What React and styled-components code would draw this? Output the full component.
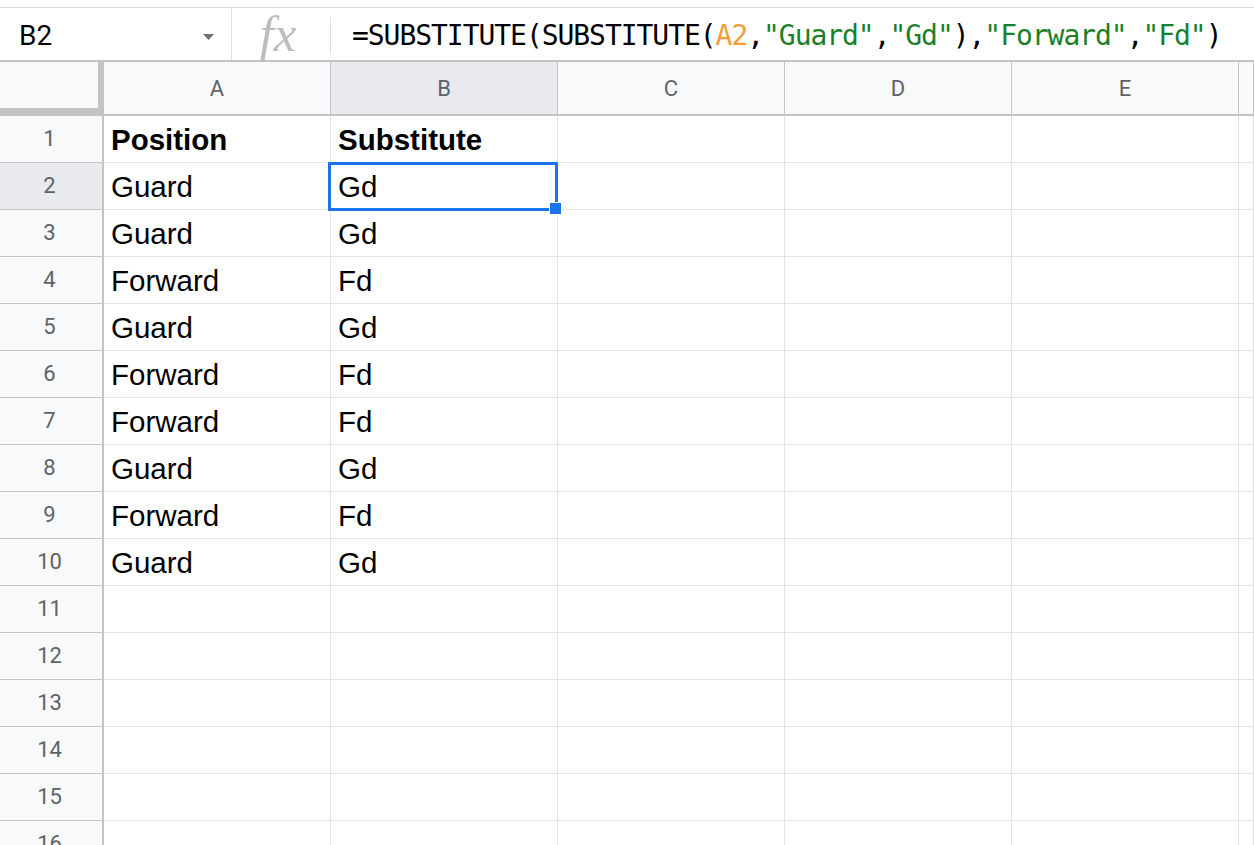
import React from "react";
import styled, { createGlobalStyle } from "styled-components";

const GlobalStyle = createGlobalStyle`
  html, body { margin: 0; padding: 0; background: #fff; overflow: hidden; }
  #root { width: 1254px; height: 845px; }
`;

const Page = styled.div`
  width: 1254px;
  height: 845px;
  overflow: hidden;
  background: #fff;
  display: flex;
  flex-direction: column;
`;

const TopGap = styled.div`
  height: 7px;
  flex: none;
  background: #fff;
`;

const FormulaBar = styled.div`
  height: 55px;
  flex: none;
  box-sizing: border-box;
  border-top: 1px solid #dadce0;
  border-bottom: 2px solid #c4c4c4;
  display: flex;
  align-items: stretch;
`;

const NameBox = styled.div`
  width: 232px;
  box-sizing: border-box;
  border-right: 1px solid #e0e0e0;
  display: flex;
  align-items: center;
  justify-content: space-between;
  padding: 3px 17px 0 19px;
  font-family: Roboto, "Liberation Sans", sans-serif;
  font-size: 28px;
  color: #000;
`;

const FxBox = styled.div`
  width: 98px;
  display: flex;
  align-items: center;
  justify-content: center;
  padding-right: 6px;
  box-sizing: border-box;
  font-family: "Liberation Serif", serif;
  font-style: italic;
  font-size: 51px;
  color: #bdbdbd;
  line-height: 1;
`;

const Divider = styled.div`
  width: 1px;
  height: 37px;
  align-self: center;
  margin-top: 2px;
  background: #e0e0e0;
`;

const FormulaText = styled.div`
  display: flex;
  align-items: center;
  padding: 3px 0 0 21px;
  font-family: "DejaVu Sans Mono", "Liberation Mono", monospace;
  font-size: 28px;
  letter-spacing: -1.05px;
  color: #000;
  white-space: pre;
`;

const Tok = styled.span`
  color: ${(p) => (p.$kind === "range" ? "#f09d3a" : p.$kind === "str" ? "#1b7f2a" : "#000")};
`;

const Grid = styled.div`
  flex: 1;
  display: grid;
  grid-template-columns: 104px repeat(5, 227px) 1fr;
  grid-template-rows: 54px;
  grid-auto-rows: 47px;
  overflow: hidden;
`;

const Corner = styled.div`
  box-sizing: border-box;
  background: #f8f9fa;
  border-right: 6px solid #c4c4c4;
  border-bottom: 8px solid #c4c4c4;
`;

const ColHeader = styled.div`
  box-sizing: border-box;
  background: ${(p) => (p.$selected ? "#e8eaed" : "#f8f9fa")};
  border-right: 1px solid #c4c4c4;
  border-bottom: 2px solid #c4c4c4;
  display: flex;
  align-items: center;
  justify-content: center;
  font-family: Roboto, "Liberation Sans", sans-serif;
  font-size: 22px;
  color: #5f6368;
`;

const RowHeader = styled.div`
  box-sizing: border-box;
  background: ${(p) => (p.$selected ? "#e8eaed" : "#f8f9fa")};
  border-right: 2px solid #c4c4c4;
  border-bottom: 1px solid #c4c4c4;
  display: flex;
  align-items: center;
  justify-content: center;
  padding: 0 3px 2px 0;
  font-family: Roboto, "Liberation Sans", sans-serif;
  font-size: 22px;
  color: #5f6368;
`;

const Cell = styled.div`
  position: relative;
  box-sizing: border-box;
  border-right: 1px solid #e2e3e3;
  border-bottom: 1px solid #e2e3e3;
  display: flex;
  align-items: flex-end;
  padding: 0 0 5px 7px;
  font-family: "Liberation Sans", Arial, sans-serif;
  font-size: 29.5px;
  line-height: 34px;
  font-weight: ${(p) => (p.$bold ? 700 : 400)};
  color: #000;
  white-space: nowrap;
`;

const Selection = styled.div`
  position: absolute;
  z-index: 2;
  left: -3px;
  top: -1px;
  right: -1px;
  bottom: -2px;
  border: 3px solid #1a73e8;
  pointer-events: none;
`;

const FillHandle = styled.div`
  position: absolute;
  right: -7px;
  bottom: -7px;
  width: 13px;
  height: 13px;
  box-sizing: border-box;
  background: #1a73e8;
  border: 1px solid #fff;
`;

const DropArrow = () => (
  <svg width="11" height="6" viewBox="0 0 11 6" style={{ marginTop: 2 }}>
    <path d="M0 0 L11 0 L5.5 6 Z" fill="#707070" />
  </svg>
);

const columns = ["A", "B", "C", "D", "E", ""];

const data = [
  ["Position", "Substitute"],
  ["Guard", "Gd"],
  ["Guard", "Gd"],
  ["Forward", "Fd"],
  ["Guard", "Gd"],
  ["Forward", "Fd"],
  ["Forward", "Fd"],
  ["Guard", "Gd"],
  ["Forward", "Fd"],
  ["Guard", "Gd"],
];

const TOTAL_ROWS = 16;

const formula = [
  ["=SUBSTITUTE(SUBSTITUTE(", "plain"],
  ["A2", "range"],
  [",", "plain"],
  ['"Guard"', "str"],
  [",", "plain"],
  ['"Gd"', "str"],
  ["),", "plain"],
  ['"Forward"', "str"],
  [",", "plain"],
  ['"Fd"', "str"],
  [")", "plain"],
];

export default function App() {
  const rows = [];
  for (let r = 0; r < TOTAL_ROWS; r++) {
    const rowData = data[r] || [];
    const rowNum = r + 1;
    rows.push(
      <RowHeader key={`rh${r}`} $selected={rowNum === 2}>
        {rowNum}
      </RowHeader>
    );
    columns.forEach((c, ci) => {
      const isSel = rowNum === 2 && ci === 1;
      rows.push(
        <Cell key={`c${r}-${ci}`} $bold={rowNum === 1}>
          {rowData[ci] || ""}
          {isSel && (
            <Selection>
              <FillHandle />
            </Selection>
          )}
        </Cell>
      );
    });
  }

  return (
    <>
      <GlobalStyle />
      <Page>
        <TopGap />
        <FormulaBar>
          <NameBox>
            <span>B2</span>
            <DropArrow />
          </NameBox>
          <FxBox>fx</FxBox>
          <Divider />
          <FormulaText>
            {formula.map(([t, k], i) => (
              <Tok key={i} $kind={k}>
                {t}
              </Tok>
            ))}
          </FormulaText>
        </FormulaBar>
        <Grid>
          <Corner />
          {columns.map((c, i) => (
            <ColHeader key={`h${i}`} $selected={c === "B"}>
              {c}
            </ColHeader>
          ))}
          {rows}
        </Grid>
      </Page>
    </>
  );
}
